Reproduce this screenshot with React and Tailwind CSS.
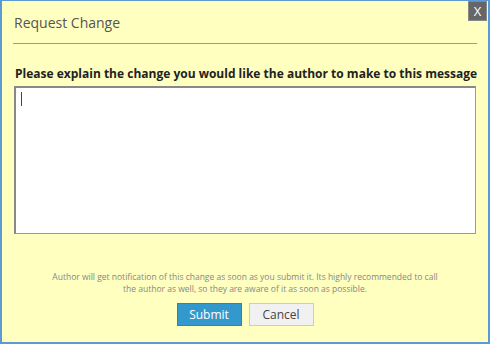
export default function App() {
  return (
    <div className="w-[490px] h-[344px] bg-[#ffffc0] border-l-2 border-r-2 border-b-2 border-t border-[#5b9bd5] relative flex flex-col" style={{ fontFamily: '"Open Sans", sans-serif' }}>
      <button className="absolute right-[1px] top-0 w-[19px] h-[20px] bg-[#666] text-white text-[13px] leading-[20px] flex items-center justify-center border border-[#888]">X</button>
      <div className="px-[11px] pt-[12px]">
        <div className="text-[14px] text-[#555] leading-[20px] pl-[1px]">Request Change</div>
        <div className="mt-[10px] h-px bg-[#999]" />
      </div>
      <div className="px-[13px] mt-[21px] text-[12px] font-bold text-[#222] leading-[18px] whitespace-nowrap">Please explain the change you would like the author to make to this message</div>
      <div className="px-[12px] mt-[3px]">
        <div className="h-[148px] bg-white border border-[#999] border-l-2 border-t-2 border-l-[#888] border-t-[#888] relative">
          <div className="absolute left-[5px] top-[4px] w-px h-[14px] bg-[#444]" />
        </div>
      </div>
      <div className="mt-[37px] text-center text-[8.5px] text-[#888] leading-[12px] px-[40px]">
        Author will get notification of this change as soon as you submit it. Its highly recommended to call<br />the author as well, so they are aware of it as soon as possible.
      </div>
      <div className="mt-[8px] flex justify-center gap-[7px]">
        <button className="w-[65px] h-[23px] bg-[#3399cc] border border-[#2a85b5] text-white text-[12px]">Submit</button>
        <button className="w-[65px] h-[23px] bg-[#f1f1f1] border border-[#ccc] text-[#444] text-[12px]">Cancel</button>
      </div>
    </div>
  );
}
